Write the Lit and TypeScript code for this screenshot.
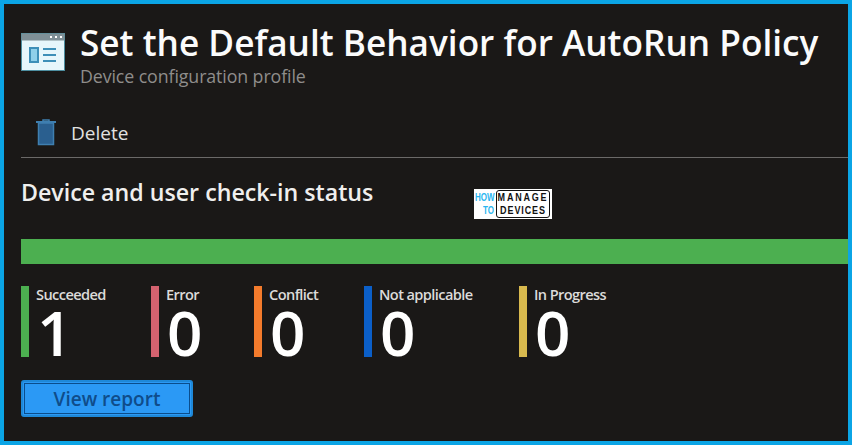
import { LitElement, html, css } from 'lit';
import { customElement } from 'lit/decorators.js';

const STATUSES = [
  { label: 'Succeeded', value: '1', color: '#4caf50', width: 130 },
  { label: 'Error', value: '0', color: '#d4626f', width: 103 },
  { label: 'Conflict', value: '0', color: '#f47b2c', width: 110 },
  { label: 'Not applicable', value: '0', color: '#0b5fc9', width: 155 },
  { label: 'In Progress', value: '0', color: '#d8b94e', width: 110 },
];

@customElement('app-root')
export class AppRoot extends LitElement {
  static styles = css`
    :host {
      display: block;
      width: 852px;
      height: 445px;
      box-sizing: border-box;
      border: 4px solid #0ba5e6;
      background: #1a1817;
      font-family: 'Open Sans', 'Noto Sans', sans-serif;
      color: #fff;
      position: relative;
      overflow: hidden;
    }
    .header {
      display: flex;
      align-items: flex-start;
      gap: 15px;
      padding: 17px 0 0 17px;
    }
    .page-icon {
      margin-top: 12px;
      flex: none;
    }
    .title {
      font-size: 35.2px;
      line-height: 42px;
      font-weight: 600;
      white-space: nowrap;
      color: #fbfbfb;
    }
    .subtitle {
      font-size: 17.8px;
      letter-spacing: -0.1px;
      line-height: 22px;
      color: #8f8d8b;
      margin-top: 2px;
    }
    .toolbar {
      display: flex;
      align-items: center;
      gap: 15px;
      margin: 30px 0 0 17px;
      padding: 0 0 9px 15px;
      height: 31px;
      border-bottom: 1px solid #6b6968;
      font-size: 19px;
      color: #e2e1e0;
    }
    h2 {
      margin: 20px 0 0 17px;
      font-size: 23.2px;
      line-height: 28px;
      font-weight: 600;
      color: #f0efee;
    }
    .progress {
      height: 25px;
      margin: 33px 0 0 17px;
      background: #4caf50;
    }
    .stats {
      display: flex;
      margin: 22px 0 0 17px;
    }
    .stat {
      display: flex;
      gap: 7px;
      flex: none;
    }
    .bar {
      width: 8px;
      height: 71px;
    }
    .label {
      font-size: 14.6px;
      line-height: 17px;
      letter-spacing: -0.6px;
      font-weight: 600;
      color: #dcdbda;
      white-space: nowrap;
    }
    .value {
      font-size: 62px;
      line-height: 54px;
      padding-top: 2px;
      padding-left: 1px;
      color: #fff;
      font-weight: 600;
    }
    .report {
      display: block;
      width: 172px;
      height: 37px;
      margin: 21px 0 0 17px;
      box-sizing: border-box;
      border: 2px solid #1e88d8;
      outline: 1px solid #0a4d8c;
      outline-offset: -4px;
      border-radius: 3px;
      background: #2b99f5;
      color: #0f4c8a;
      font: 600 19px 'Open Sans', 'Noto Sans', sans-serif;
      padding: 0;
    }
    .logo {
      position: absolute;
      left: 470px;
      top: 185px;
      width: 78px;
      height: 30px;
      box-sizing: border-box;
      background: #fff;
      display: flex;
      align-items: center;
      gap: 2px;
      padding: 1px 2px 1px 1px;
      font-family: 'Liberation Sans', sans-serif;
      font-weight: 700;
      font-size: 9px;
      line-height: 13px;
    }
    .how {
      width: 19px;
      font-size: 8px;
      text-align: right;
      color: #29b6f0;
      flex: none;
    }
    .how span {
      display: block;
      transform: scaleY(1.35);
    }
    .manage {
      flex: 1;
      height: 100%;
      box-sizing: border-box;
      border: 1.5px solid #111;
      border-radius: 3px;
      color: #111;
      text-align: center;
      white-space: nowrap;
    }
    .manage span {
      display: block;
      letter-spacing: 0.9px;
      transform: scaleY(1.25);
    }
    .manage .wide {
      letter-spacing: 1.8px;
    }
  `;

  render() {
    return html`
      <div class="header">
        <svg class="page-icon" width="44" height="38" viewBox="0 0 44 38">
          <rect x="0.5" y="0.5" width="43" height="37" fill="#e6f6fb" stroke="#4d8ea0" />
          <rect x="0.5" y="0.5" width="43" height="7" fill="#7f8f96" />
          <g fill="#fff">
            <rect x="29" y="3" width="2" height="2" />
            <rect x="34" y="3" width="2" height="2" />
            <rect x="39" y="3" width="2" height="2" />
          </g>
          <rect x="9" y="15" width="8" height="14" fill="#8fd0ea" stroke="#3d8fb8" stroke-width="2" />
          <path d="M22 16h13M22 22h13M22 28h13" stroke="#3d8fb8" stroke-width="2" />
        </svg>
        <div>
          <div class="title">Set the Default Behavior for AutoRun Policy</div>
          <div class="subtitle">Device configuration profile</div>
        </div>
      </div>
      <div class="toolbar">
        <svg width="20" height="27" viewBox="0 0 20 27">
          <path d="M7 2.5V1h6v1.5" fill="none" stroke="#3f7fb0" stroke-width="1.5" />
          <path d="M0 3h20" stroke="#3f7fb0" stroke-width="2" />
          <rect x="2.5" y="4" width="15" height="21.5" fill="#2a5f8f" stroke="#3f7fb0" stroke-width="1.5" />
        </svg>
        <span>Delete</span>
      </div>
      <h2>Device and user check-in status</h2>
      <div class="logo">
        <div class="how"><span>HOW</span><span>TO</span></div>
        <div class="manage"><span class="wide">MANAGE</span><span>DEVICES</span></div>
      </div>
      <div class="progress"></div>
      <div class="stats">
        ${STATUSES.map(
          (s) => html`
            <div class="stat" style="width:${s.width}px">
              <div class="bar" style="background:${s.color}"></div>
              <div>
                <div class="label">${s.label}</div>
                <div class="value">${s.value}</div>
              </div>
            </div>
          `
        )}
      </div>
      <button class="report">View report</button>
    `;
  }
}
